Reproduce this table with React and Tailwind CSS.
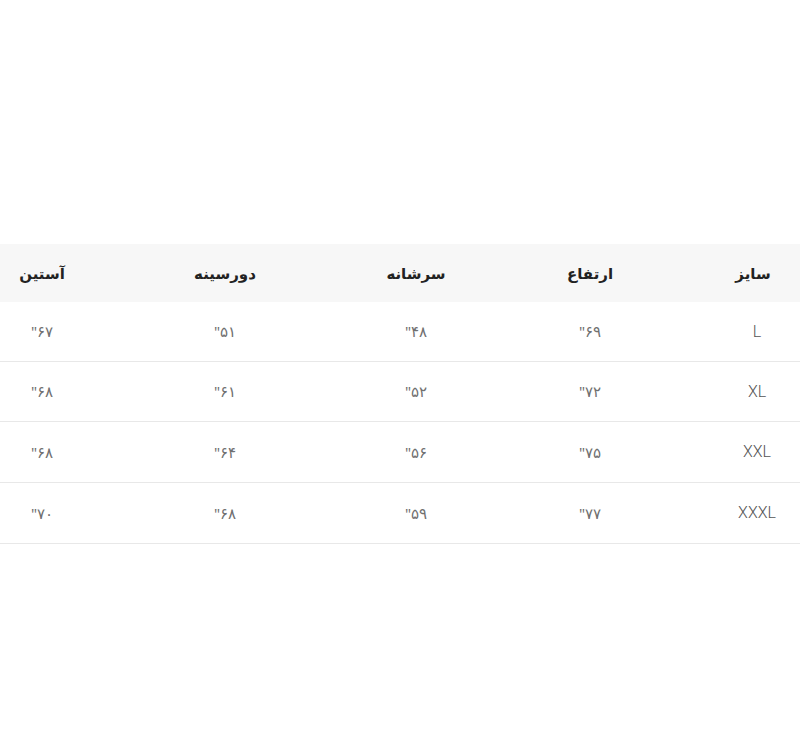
export default function App() {
  const head = ["سایز", "ارتفاع", "سرشانه", "دورسینه", "آستین"];
  const rows = [
    ["L", "۶۹\"", "۴۸\"", "۵۱\"", "۶۷\""],
    ["XL", "۷۲\"", "۵۲\"", "۶۱\"", "۶۸\""],
    ["XXL", "۷۵\"", "۵۶\"", "۶۴\"", "۶۸\""],
    ["XXXL", "۷۷\"", "۵۹\"", "۶۸\"", "۷۰\""],
  ];
  const heights = ["h-[60px]", "h-[60px]", "h-[61px]", "h-[61px]"];
  const cols = "grid grid-cols-[86px_248px_100px_282px_84px]";
  return (
    <div className="w-[800px] h-[735px] bg-white pt-[244px]" style={{ fontFamily: '"Noto Sans", "DejaVu Sans", sans-serif' }}>
      <div dir="rtl" className="w-full">
        <div className={`${cols} h-[58px] items-center bg-[#f7f7f7] text-[#222] text-[15px] font-bold`}>
          {head.map((h, i) => (
            <div key={i} className={i === 0 ? "text-center pr-[8px]" : "text-center"}>{h}</div>
          ))}
        </div>
        {rows.map((r, ri) => (
          <div key={ri} className={`${cols} ${heights[ri]} items-center border-b border-[#e8e8e8] text-[#707070] text-[15px]`}>
            {r.map((c, ci) => (
              <div
                key={ci}
                className={ci === 0 ? "text-center text-[16px] font-['Roboto',sans-serif] font-light text-[#555]" : "text-center"}
              >
                {c}
              </div>
            ))}
          </div>
        ))}
      </div>
    </div>
  );
}
